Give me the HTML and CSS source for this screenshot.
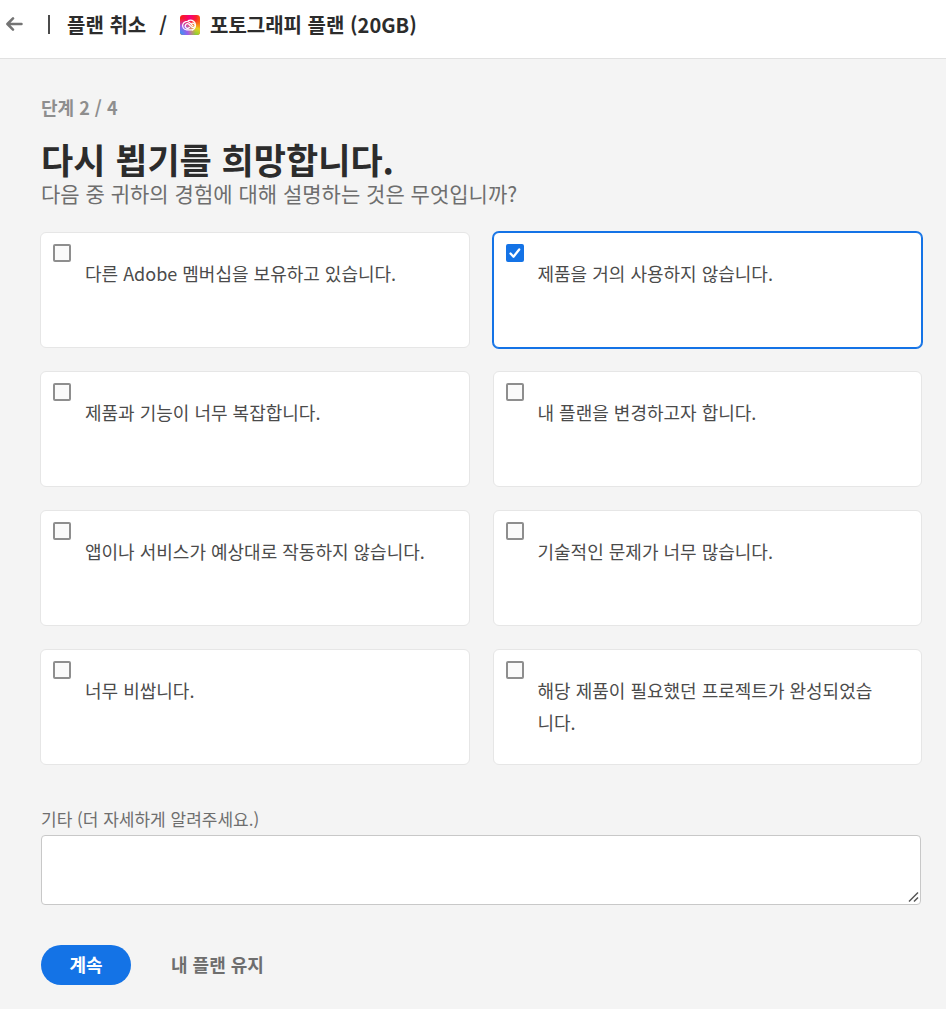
FILE: index.html
```html
<!DOCTYPE html>
<html lang="ko">
<head>
  <meta charset="UTF-8">
  <meta name="viewport" content="width=device-width, initial-scale=1.0">
  <title>플랜 취소</title>
  <link rel="stylesheet" href="styles.css">
</head>
<body>
  <header class="topbar">
    <a href="#" class="back" aria-label="뒤로">
      <svg width="18" height="16" viewBox="0 0 18 16" fill="none" stroke="#747474" stroke-width="2.5" stroke-linecap="round" stroke-linejoin="round">
        <path d="M15.5 7H2M7 1.4L1.4 7 7 12.6"/>
      </svg>
    </a>
    <span class="divider"></span>
    <span class="crumb">플랜 취소</span>
    <span class="slash">/</span>
    <svg class="logo" width="20" height="20" viewBox="0 0 20 20">
      <defs>
        <linearGradient id="base" x1="0" y1="0" x2="1" y2="0">
          <stop offset="0" stop-color="#f8200c"/>
          <stop offset="0.5" stop-color="#f5007c"/>
          <stop offset="0.8" stop-color="#fa2030"/>
          <stop offset="1" stop-color="#ff5a10"/>
        </linearGradient>
        <radialGradient id="blue" cx="0" cy="0.95" r="0.8">
          <stop offset="0" stop-color="#2f9cf5"/>
          <stop offset="0.5" stop-color="#a05ce8"/>
          <stop offset="1" stop-color="#e03cc8" stop-opacity="0"/>
        </radialGradient>
        <radialGradient id="green" cx="0.75" cy="1.1" r="0.9">
          <stop offset="0" stop-color="#5fd03c"/>
          <stop offset="0.5" stop-color="#e8d020"/>
          <stop offset="1" stop-color="#ff9000" stop-opacity="0"/>
        </radialGradient>
      </defs>
      <rect width="20" height="20" rx="3" fill="url(#base)"/>
      <rect width="20" height="20" rx="3" fill="url(#green)"/>
      <rect width="20" height="20" rx="3" fill="url(#blue)"/>
      <g fill="none" stroke="#fff" stroke-width="1.2" stroke-linecap="round">
        <path d="M12.6 14.9H6.7a4.2 4.2 0 1 1 2.9-7.3l3.3 3.3"/>
        <path d="M8.2 5.6a5 5 0 1 1 4.4 9.3"/>
        <path d="M9.4 12.4a2.3 2.3 0 1 1-.8-3.4l3 3c1.3 1 3.2.5 3.5-1.2.3-1.8-1.5-3.2-3.4-2.3"/>
      </g>
    </svg>
    <span class="plan">포토그래피 플랜 (20GB)</span>
  </header>

  <main class="content">
    <p class="step">단계 2 / 4</p>
    <h1>다시 뵙기를 희망합니다.</h1>
    <p class="question">다음 중 귀하의 경험에 대해 설명하는 것은 무엇입니까?</p>

    <form>
      <div class="reasons">
        <label class="card">
          <input type="checkbox" name="reason">
          <span>다른 Adobe 멤버십을 보유하고 있습니다.</span>
        </label>
        <label class="card">
          <input type="checkbox" name="reason" checked>
          <span>제품을 거의 사용하지 않습니다.</span>
        </label>
        <label class="card">
          <input type="checkbox" name="reason">
          <span>제품과 기능이 너무 복잡합니다.</span>
        </label>
        <label class="card">
          <input type="checkbox" name="reason">
          <span>내 플랜을 변경하고자 합니다.</span>
        </label>
        <label class="card">
          <input type="checkbox" name="reason">
          <span>앱이나 서비스가 예상대로 작동하지 않습니다.</span>
        </label>
        <label class="card">
          <input type="checkbox" name="reason">
          <span>기술적인 문제가 너무 많습니다.</span>
        </label>
        <label class="card">
          <input type="checkbox" name="reason">
          <span>너무 비쌉니다.</span>
        </label>
        <label class="card">
          <input type="checkbox" name="reason">
          <span>해당 제품이 필요했던 프로젝트가 완성되었습니다.</span>
        </label>
      </div>

      <div class="other">
        <label for="other">기타 (더 자세하게 알려주세요.)</label>
        <textarea id="other" name="other"></textarea>
      </div>

      <div class="actions">
        <button type="button" class="primary">계속</button>
        <button type="button" class="quiet">내 플랜 유지</button>
      </div>
    </form>
  </main>
</body>
</html>
```

FILE: styles.css
```css
* {
  margin: 0;
  padding: 0;
  box-sizing: border-box;
}

body {
  font-family: "Noto Sans CJK KR", sans-serif;
  background-color: #f4f4f4;
  color: #2c2c2c;
}

/* Top bar */
.topbar {
  display: flex;
  align-items: center;
  height: 59px;
  padding: 0 6px 9px;
  background-color: #fff;
  border-bottom: 1px solid #e1e1e1;
  font-size: 20px;
  line-height: 28px;
  font-weight: 700;
}

.back {
  display: flex;
}

.divider {
  width: 2px;
  height: 19px;
  margin: 0 17px 0 24px;
  background-color: #4b4b4b;
}

.slash {
  margin: 0 13px;
}

.logo {
  margin-right: 10px;
}

/* Main content */
.content {
  padding: 36px 24px 24px 40px;
}

.step {
  padding-left: 1px;
  font-size: 18px;
  line-height: 24px;
  font-weight: 700;
  color: #8e8e8e;
}

h1 {
  margin-top: 20px;
  padding-left: 1px;
  font-size: 35px;
  line-height: 40px;
  font-weight: 700;
}

.question {
  margin-top: 2px;
  padding-left: 1px;
  font-size: 21px;
  line-height: 24px;
  color: #6e6e6e;
}

/* Reason cards */
.reasons {
  display: grid;
  grid-template-columns: 1fr 1fr;
  gap: 23px;
  margin-top: 27px;
}

.card {
  display: flex;
  align-items: flex-start;
  min-height: 116px;
  padding: 11px 38px 11px 12px;
  background-color: #fff;
  border: 1px solid #e6e6e6;
  border-radius: 6px;
  font-size: 18px;
  line-height: 32px;
  color: #4b4b4b;
  cursor: pointer;
}

.card span {
  margin: 13px 0 0 14px;
}

.card:has(input:checked) {
  border-color: #1473e6;
  box-shadow: 0 0 0 1px #1473e6;
}

.card input {
  appearance: none;
  flex: none;
  width: 18px;
  height: 18px;
  border: 2px solid #8e8e8e;
  border-radius: 2px;
  background-color: #fafafa;
}

.card input:checked {
  border-color: #1473e6;
  background: #1473e6 url("data:image/svg+xml,%3Csvg xmlns='http://www.w3.org/2000/svg' viewBox='0 0 14 14'%3E%3Cpath d='M2.5 7.5l3 3.2L11.2 3.5' fill='none' stroke='%23fff' stroke-width='2.3' stroke-linecap='round' stroke-linejoin='round'/%3E%3C/svg%3E") center / 14px 14px no-repeat;
}

/* Free text */
.other {
  margin-top: 42px;
  padding: 0 1px;
}

.other label {
  display: block;
  margin-bottom: 4px;
  font-size: 17px;
  line-height: 24px;
  color: #6e6e6e;
}

textarea {
  display: block;
  width: 100%;
  height: 70px;
  padding: 8px 12px;
  border: 1px solid #c8c8c8;
  border-radius: 4px;
  background-color: #fff;
  font: inherit;
  resize: vertical;
}

textarea::-webkit-resizer {
  background: url("data:image/svg+xml,%3Csvg xmlns='http://www.w3.org/2000/svg' viewBox='0 0 15 15'%3E%3Cpath d='M4 12.5L13 3.5M9 12.5l4-4' fill='none' stroke='%23555' stroke-width='1.5'/%3E%3C/svg%3E") center / 15px 15px no-repeat;
}

/* Buttons */
.actions {
  display: flex;
  align-items: center;
  gap: 10px;
  margin-top: 40px;
  padding-left: 1px;
}

button {
  height: 40px;
  padding-bottom: 2px;
  border: none;
  border-radius: 20px;
  background: none;
  font-family: inherit;
  font-size: 18px;
  line-height: 24px;
  font-weight: 700;
  cursor: pointer;
}

.primary {
  width: 90px;
  background-color: #1473e6;
  color: #fff;
}

.quiet {
  padding: 0 30px 2px;
  color: #6e6e6e;
}
```
